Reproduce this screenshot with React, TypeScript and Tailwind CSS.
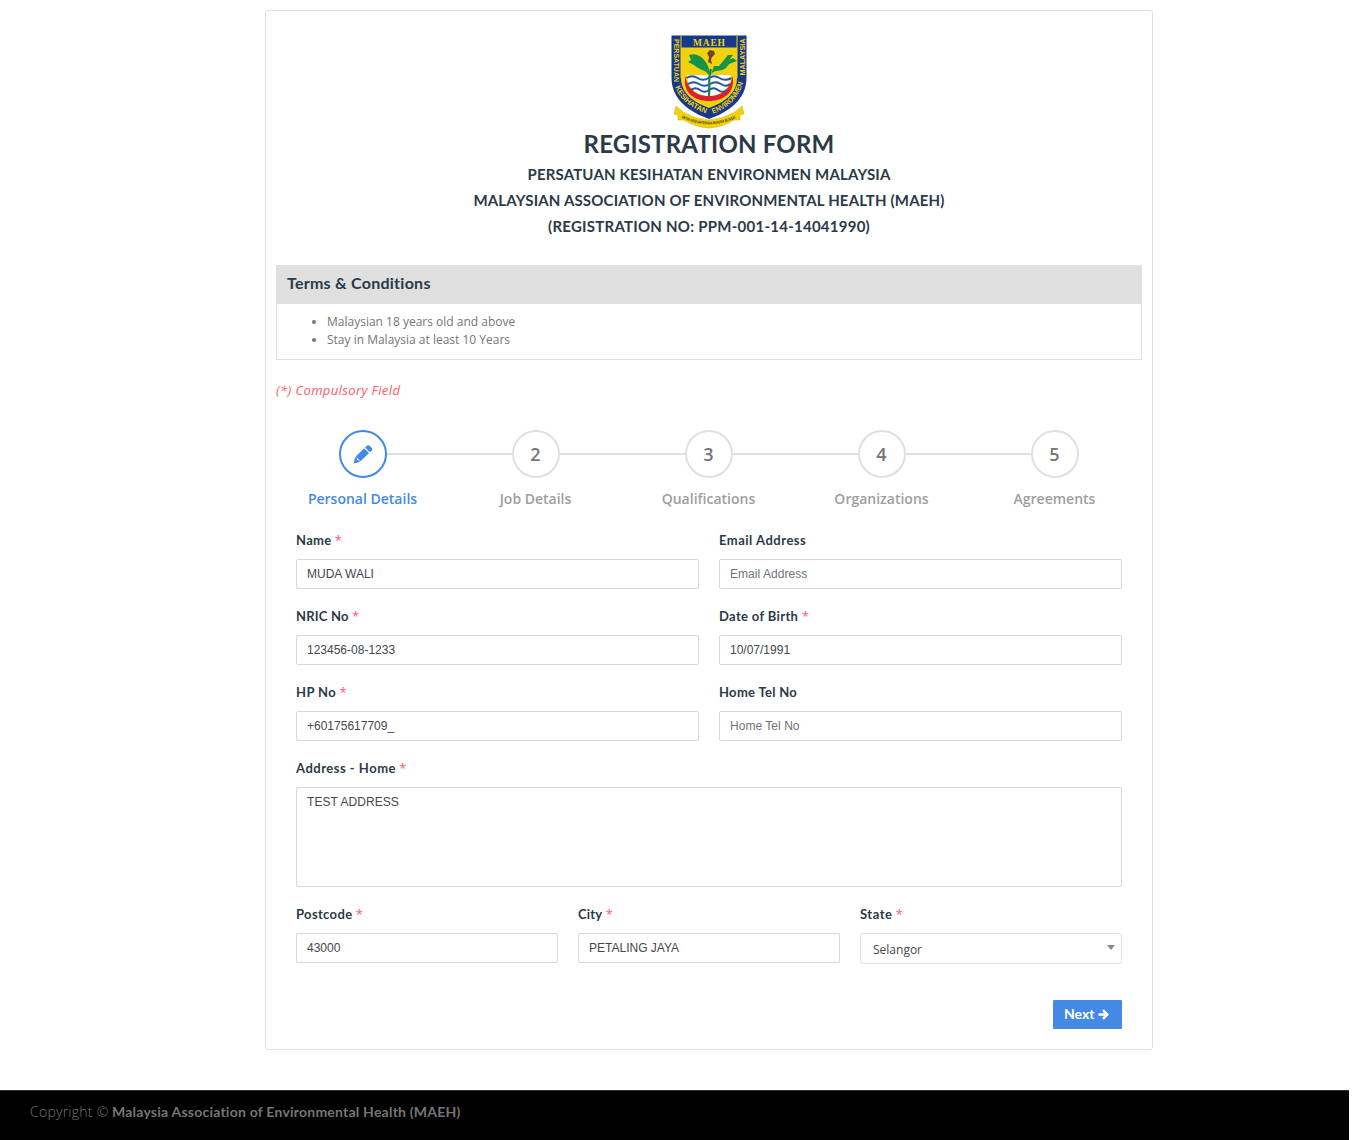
import React from "react";

const NUN = "font-['Lato','Open_Sans',sans-serif]";

function Crest() {
  return (
    <svg width="76" height="94" viewBox="0 0 76 94" className="mr-[1px] block">
      <defs>
        <path id="leftArc" d="M3.400 50C8 64 19 73 36 79" />
        <path id="rightArc" d="M41 79C58 73 69 62 73 44" />
        <path id="ribbon" d="M7 81Q20 88.500 38 89.500Q56 88.500 69 81" />
      </defs>
      <path d="M.5 .5H75.500V43C75.500 64 58 77 38 84C18 77 .5 64 .5 43Z" fill="#17398c" />
      <path d="M10 13H66V43C66 58 54 67 38 73C22 67 10 58 10 43Z" fill="#f2d20c" />
      <path d="M10 1V43M66 1V43" stroke="#f2d20c" strokeWidth="1" />
      <path d="M10 13H66" stroke="#f2d20c" strokeWidth="1" />
      <path d="M16 40H60C60 53 50 60 38 62C26 60 16 53 16 40Z" fill="#fff" />
      <path d="M14.500 41C17 57 28 61 38 61S59 57 61.500 41C65 58 52 66 38 66S11 58 14.500 41Z" fill="#e01e2d" />
      <g fill="none" stroke="#2755a6" strokeWidth="2">
        <path d="M15.500 43q5.500-3.500 11 0t11 0t11 0t12 0" />
        <path d="M17 49q5.500-3.500 11 0t11 0t11 0t9 0" />
        <path d="M20 55q4.500-3.500 9 0t9 0t9 0t9 0" />
      </g>
      <path d="M38 61C39 49 37 43 40 34" fill="none" stroke="#168443" strokeWidth="2.200" />
      <path d="M38 40C33 34 28 35 23 30L17 27L20 25L18 20C27 17 33 24 36 29C38 33 39 37 39 41Z" fill="#15934a" />
      <path d="M39 42C42 33 48 38 55 33L58 29L66 26L62 23L58 25L62 20L57 20L53 25L48 31L43 31Z" fill="#15934a" />
      <path d="M36 18L39 15L43 16L44 19L41 22L40 25L41 29L37 27L38 22Z" fill="#704321" />
      <text x="38" y="10.500" textAnchor="middle" fill="#f2d20c" fontSize="9.500" fontWeight="700" fontFamily="Liberation Serif" textLength="32">MAEH</text>
      <g fill="#f2d20c" fontFamily="Liberation Sans" fontWeight="700" fontSize="7.500">
        <text transform="translate(2.800 4) rotate(90)" textLength="43" lengthAdjust="spacingAndGlyphs">PERSATUAN</text>
        <text transform="translate(73.500 40.500) rotate(-90)" textLength="37" lengthAdjust="spacingAndGlyphs">MALAYSIA</text>
        <text><textPath href="#leftArc" startOffset="2" textLength="42" lengthAdjust="spacingAndGlyphs">KESIHATAN</textPath></text>
        <text><textPath href="#rightArc" startOffset="1" textLength="45" lengthAdjust="spacingAndGlyphs">ENVIRONMEN</textPath></text>
      </g>
      <path d="M5 71L12 77Q24 84 38 85Q52 84 64 77L71 71L73 79L69 80L69 85L63 85Q52 92 38 93Q24 92 13 85L7 85L7 80L3 79Z" fill="#f2d20c" stroke="#c9a70a" strokeWidth=".5" />
      <text fontSize="4" fontWeight="700" fill="#3a3510" fontFamily="Liberation Sans"><textPath href="#ribbon" startOffset="4" textLength="56" lengthAdjust="spacingAndGlyphs">UNTUK KESEJAHTERAAN MANUSIA SEJAGAT</textPath></text>
    </svg>
  );
}

function Label({ text, required, track = "tracking-[0.3px]" }: { text: string; required?: boolean; track?: string }) {
  return (
    <div className={`${NUN} h-[29px] text-[13px] leading-[20px] font-bold text-[#2c3a48] whitespace-pre ${track}`}>
      {text}
      {required && <span className="font-['Open_Sans',sans-serif] tracking-normal font-normal text-[#ff5b6b]"> *</span>}
    </div>
  );
}

type FieldProps = { label: string; value: string; required?: boolean; placeholder?: boolean; track?: string };

function Field({ label, value, required, placeholder, track }: FieldProps) {
  return (
    <div className="min-w-0 flex-1">
      <Label text={label} required={required} track={track} />
      <div className={`h-[30px] rounded-[2px] border border-[#d6d8da] px-[10px] font-['Liberation_Sans',sans-serif] text-[12px] leading-[28px] ${placeholder ? "tracking-[0.04px] text-[#6c757d]" : "text-[#44484c]"}`}>
        {value}
      </div>
    </div>
  );
}

function Pencil() {
  return (
    <svg width="20" height="20" viewBox="0 0 20 20" fill="#4489e4">
      <path d="M2.800 12.500 11.200 4.200 16 9 7.600 17.300Z" />
      <path d="M12.100 3.400 13.900 1.700Q15.300.6 16.600 1.800L18.800 4Q20 5.400 18.900 6.600L17 8.200Z" />
      <path d="M2.200 13.300 3.900 13.600 4 15.900 6.400 16.200 6.600 17.900 .6 19.500Z" />
    </svg>
  );
}

const steps = ["Personal Details", "Job Details", "Qualifications", "Organizations", "Agreements"];

export default function App() {
  return (
    <div className="h-[1140px] overflow-hidden bg-white font-['Open_Sans',sans-serif]">
      <div className="h-[1090px] pt-[10px]">
        <main className="ml-[265px] h-[1040px] w-[888px] rounded-[3px] border border-[#e0e0e0] px-[10px] pt-[24px]">
          <header className={`${NUN} flex flex-col items-center font-bold text-[#2c3a48]`}>
            <Crest />
            <h1 className="h-[32px] text-[24px] leading-[30px] tracking-[0.2px]">REGISTRATION FORM</h1>
            <p className="text-[15px] leading-[26px] tracking-[0.16px]">PERSATUAN KESIHATAN ENVIRONMEN MALAYSIA</p>
            <p className="text-[15px] leading-[26px] tracking-[0.17px]">MALAYSIAN ASSOCIATION OF ENVIRONMENTAL HEALTH (MAEH)</p>
            <p className="text-[15px] leading-[26px] tracking-[0.25px]">(REGISTRATION NO: PPM-001-14-14041990)</p>
          </header>

          <section className="mt-[26px] h-[95px] border border-[#e0e0e0]">
            <h2 className={`${NUN} h-[38px] bg-[#e0e0e0] px-[10px] text-[16px] leading-[34px] font-bold tracking-[0.26px] text-[#2c3a48]`}>Terms &amp; Conditions</h2>
            <ul className="list-disc pt-[9px] pl-[50px] text-[12px] leading-[18px] text-[#757575]">
              <li>Malaysian 18 years old and above</li>
              <li>Stay in Malaysia at least 10 Years</li>
            </ul>
          </section>

          <p className="mt-[20px] h-[50px] text-[13px] leading-[20px] tracking-[0.38px] text-[#ff5b6b] italic">(*) Compulsory Field</p>

          <div className="flex w-[866px]">
            {steps.map((s, i) => (
              <div key={s} className="flex w-[173px] flex-col items-center">
                <div className="flex w-full items-center">
                  <span className={`h-[2px] flex-1 ${i === 0 ? "" : "bg-[#e0e0e0]"}`} />
                  <span className={`flex size-[48px] items-center justify-center rounded-full border-2 text-[18px] font-semibold ${i === 0 ? "border-[#4489e4]" : "border-[#e0e0e0] text-[#757575]"}`}>
                    {i === 0 ? <Pencil /> : i + 1}
                  </span>
                  <span className={`h-[2px] flex-1 ${i === 4 ? "" : "bg-[#e0e0e0]"}`} />
                </div>
                <span className={`mt-[11px] text-[14px] leading-[20px] font-semibold ${i === 0 ? "text-[#4489e4]" : "text-[#9e9e9e]"}`}>{s}</span>
              </div>
            ))}
          </div>

          <div className="mt-[21px] flex flex-col gap-[17px] px-[20px]">
            <div className="flex gap-[20px]">
              <Field label="Name" value="MUDA WALI" required />
              <Field label="Email Address" value="Email Address" placeholder track="tracking-[0.5px]" />
            </div>
            <div className="flex gap-[20px]">
              <Field label="NRIC No" value="123456-08-1233" required track="tracking-[0.2px]" />
              <Field label="Date of Birth" value="10/07/1991" required track="tracking-[0.35px]" />
            </div>
            <div className="flex gap-[20px]">
              <Field label="HP No" value="+60175617709_" required track="tracking-[0.4px]" />
              <Field label="Home Tel No" value="Home Tel No" placeholder />
            </div>
            <div>
              <Label text="Address - Home" required track="tracking-[0.5px]" />
              <div className="h-[100px] rounded-[2px] border border-[#d6d8da] px-[10px] pt-[5px] font-['Liberation_Sans',sans-serif] text-[12px] leading-[18px] tracking-[0.06px] text-[#44484c]">TEST ADDRESS</div>
            </div>
            <div className="flex gap-[20px]">
              <Field label="Postcode" value="43000" required track="tracking-[0.35px]" />
              <Field label="City" value="PETALING JAYA" required track="tracking-[0.2px]" />
              <div className="min-w-0 flex-1">
                <Label text="State" required track="tracking-[0.5px]" />
                <div className="flex h-[31px] items-center justify-between rounded-[3px] border border-[#e0e0e0] pr-[6px] pl-[12px] text-[12px] text-[#44484c]">
                  <span className="pt-[3px]">Selangor</span>
                  <span className="mb-[2px] border-x-[4px] border-t-[5px] border-x-transparent border-t-[#888]" />
                </div>
              </div>
            </div>
          </div>

          <div className="mt-[36px] flex justify-end pr-[20px]">
            <button className={`${NUN} flex h-[29px] w-[69px] items-center rounded-[1px] bg-[#4489e4] pb-[2px] pl-[11px] text-[14px] font-bold text-white`}>
              Next
              <svg width="11" height="11" viewBox="0 0 11 11" className="mt-[1px] ml-[4px]" fill="none" stroke="white" strokeWidth="2.500">
                <path d="M.5 5.500H9M5 1.200 9.300 5.500 5 9.800" />
              </svg>
            </button>
          </div>
        </main>
      </div>
      <footer className="h-[50px] w-[1349px] border-t border-[#263238] bg-black pl-[30px] text-[14px] leading-[42px] whitespace-pre text-[#757575]">
        <span className="inline-block w-[82px] font-light tracking-[0.25px]">Copyright © </span>
        <span className={`${NUN} font-bold tracking-[0.22px]`}>Malaysia Association of Environmental Health (MAEH)</span>
      </footer>
    </div>
  );
}
